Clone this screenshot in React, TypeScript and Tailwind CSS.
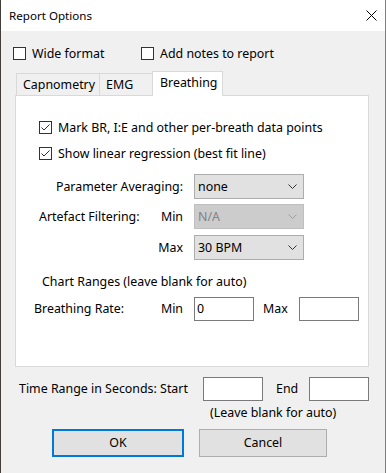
import React from 'react';

const Check: React.FC<{ checked?: boolean }> = ({ checked }) => (
  <span className="w-[13px] h-[13px] shrink-0 border border-[#333333] bg-white flex items-center justify-center">
    {checked && (
      <svg width="11" height="11" viewBox="0 0 11 11">
        <path d="M1.5 5.5 L4 8 L9.5 2.5" fill="none" stroke="#333333" strokeWidth="1" />
      </svg>
    )}
  </span>
);

const Chevron: React.FC<{ color?: string }> = ({ color = '#333333' }) => (
  <svg width="9" height="5" viewBox="0 0 9 5" className="shrink-0">
    <path d="M0.5 0.5 L4.5 4.5 L8.5 0.5" fill="none" stroke={color} strokeWidth="1" />
  </svg>
);

const Select: React.FC<{ value: string; disabled?: boolean }> = ({ value, disabled }) => (
  <div
    className={`w-[110px] h-[25px] flex items-center justify-between pl-[3px] pr-[6px] border ${
      disabled ? 'bg-[#cccccc] border-[#bfbfbf] text-[#838383]' : 'bg-[#e1e1e1] border-[#adadad] text-black'
    }`}
  >
    <span>{value}</span>
    <Chevron color={disabled ? '#a0a0a0' : '#333333'} />
  </div>
);

const TextBox: React.FC<{ value?: string }> = ({ value }) => (
  <div className="w-[60px] h-[24px] border border-[#7a7a7a] bg-white flex items-center pl-[2px]">{value}</div>
);

export default function App() {
  return (
    <div className="w-[386px] h-[473px] bg-[#f0f0f0] border-l border-l-[#433e3a] border-r border-r-[#7f7f7f] flex flex-col font-['Noto_Sans',sans-serif] text-[12.4px] leading-[16px] text-black">
      <div className="h-[31px] shrink-0 bg-white flex items-center justify-between pl-[8px] pr-[8px]">
        <span className="text-[11.6px]">Report Options</span>
        <svg width="11" height="11" viewBox="0 0 11 11">
          <path d="M0.5 0.5 L10.5 10.5 M10.5 0.5 L0.5 10.5" stroke="#000" strokeWidth="1" />
        </svg>
      </div>

      <div className="mt-[16px] h-[13px] flex items-center pl-[12px]">
        <div className="w-[128px] flex items-center gap-[6px]">
          <Check />
          <span>Wide format</span>
        </div>
        <div className="flex items-center gap-[6px]">
          <Check />
          <span>Add notes to report</span>
        </div>
      </div>

      <div className="mt-[11px] h-[24px] flex items-end ml-[15px]">
        <div className="w-[84px] h-[22px] border-l border-t border-r border-[#d9d9d9] flex items-center pl-[6px]">Capnometry</div>
        <div className="w-[53px] h-[22px] border-t border-r border-[#d9d9d9] flex items-center pl-[6px]">EMG</div>
        <div className="relative z-10 -ml-px -mb-px w-[71px] h-[25px] bg-white border-l border-t border-r border-[#d9d9d9] flex items-center pl-[7px] pb-[2px]">
          Breathing
        </div>
      </div>

      <div className="ml-[14px] w-[354px] h-[272px] shrink-0 border border-[#d9d9d9] bg-white flex flex-col">
        <div className="mt-[25px] ml-[23px] h-[13px] flex items-center gap-[6px]">
          <Check checked />
          <span>Mark BR, I:E and other per-breath data points</span>
        </div>
        <div className="mt-[13px] ml-[23px] h-[13px] flex items-center gap-[6px]">
          <Check checked />
          <span>Show linear regression (best fit line)</span>
        </div>

        <div className="mt-[14px] h-[25px] flex items-center">
          <div className="w-[178px] text-right pr-[11px]">Parameter Averaging:</div>
          <Select value="none" />
        </div>
        <div className="mt-[5px] h-[25px] flex items-center">
          <div className="w-[178px] flex justify-between pl-[23px] pr-[11px]">
            <span>Artefact Filtering:</span>
            <span>Min</span>
          </div>
          <Select value="N/A" disabled />
        </div>
        <div className="mt-[6px] h-[25px] flex items-center">
          <div className="w-[178px] text-right pr-[11px]">Max</div>
          <Select value="30 BPM" />
        </div>

        <div className="mt-[14px] pl-[26px]">Chart Ranges (leave blank for auto)</div>

        <div className="mt-[7px] h-[24px] flex items-center">
          <div className="w-[178px] flex justify-between pl-[18px] pr-[11px]">
            <span>Breathing Rate:</span>
            <span>Min</span>
          </div>
          <TextBox value="0" />
          <div className="w-[45px] pl-[9px]">Max</div>
          <TextBox />
        </div>
      </div>

      <div className="mt-[10px] h-[24px] flex items-center">
        <div className="w-[202px] pl-[18px]">Time Range in Seconds: Start</div>
        <TextBox />
        <div className="w-[46px] pl-[13px]">End</div>
        <TextBox />
      </div>
      <div className="mt-[4px] pl-[209px]">(Leave blank for auto)</div>

      <div className="mt-[8px] flex pl-[51px] gap-[15px]">
        <button className="w-[132px] h-[28px] border-2 border-[#0078d7] bg-[#e1e1e1] flex items-center justify-center">OK</button>
        <button className="w-[128px] h-[28px] border border-[#adadad] bg-[#e1e1e1] flex items-center justify-center">Cancel</button>
      </div>
    </div>
  );
}
